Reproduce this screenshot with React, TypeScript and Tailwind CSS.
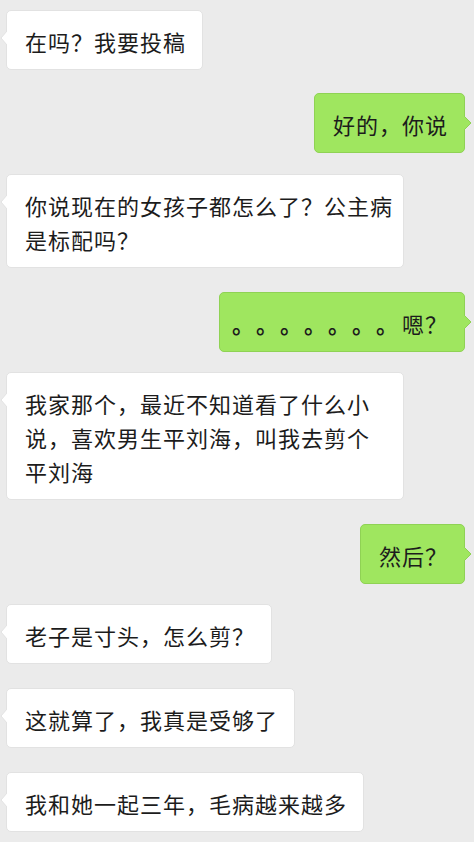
import React from 'react';

type Msg = {
  side: 'left' | 'right';
  lines: string[];
  mt: string;
  w?: string;
  dots?: boolean;
};

const messages: Msg[] = [
  { side: 'left', lines: ['在吗？我要投稿'], mt: 'mt-[10px]' },
  { side: 'right', lines: ['好的，你说'], mt: 'mt-[23px]' },
  { side: 'left', lines: ['你说现在的女孩子都怎么了？公主病', '是标配吗？'], mt: 'mt-[21px]', w: 'w-[398px]' },
  { side: 'right', lines: ['嗯？'], mt: 'mt-[24px]', dots: true },
  {
    side: 'left',
    lines: ['我家那个，最近不知道看了什么小', '说，喜欢男生平刘海，叫我去剪个', '平刘海'],
    mt: 'mt-[20px]',
    w: 'w-[398px]',
  },
  { side: 'right', lines: ['然后？'], mt: 'mt-[24px]' },
  { side: 'left', lines: ['老子是寸头，怎么剪？'], mt: 'mt-[20px]' },
  { side: 'left', lines: ['这就算了，我真是受够了'], mt: 'mt-[24px]' },
  { side: 'left', lines: ['我和她一起三年，毛病越来越多'], mt: 'mt-[24px]' },
];

function Bubble({ msg }: { msg: Msg }) {
  const isRight = msg.side === 'right';
  return (
    <div className={`flex ${isRight ? 'justify-end pr-[9px]' : 'justify-start pl-[6px]'} ${msg.mt}`}>
      <div
        className={`relative rounded-[5px] border ${msg.dots ? 'pl-[12px]' : 'pl-[18px]'} pr-[16px] pt-[13px] pb-[11px] text-[22px] leading-[34px] tracking-[1px] text-[#1c1c1c] ${
          isRight ? 'bg-[#9fe65f] border-[#8fd254]' : 'bg-white border-[#e2e2e2]'
        } ${msg.w ?? ''}`}
      >
        {msg.lines.map((l, i) => (
          <div key={i} className="whitespace-nowrap">
            {msg.dots &&
              [0, 1, 2, 3, 4, 5, 6].map((d) => (
                <span key={d} className="inline-block w-[24px] font-bold">
                  。
                </span>
              ))}
            {msg.dots ? <span className="ml-[2px]">{l}</span> : l}
          </div>
        ))}
        {/* tail */}
        {isRight ? (
          <svg className="absolute top-[22px] -right-[7px]" width="7" height="14" viewBox="0 0 7 14">
            <path d="M0 0 L7 7 L0 14 Z" fill="#9fe65f" />
            <path d="M0 0 L7 7 L0 14" fill="none" stroke="#8fd254" strokeWidth="1" />
          </svg>
        ) : (
          <svg className="absolute top-[20px] -left-[7px]" width="7" height="14" viewBox="0 0 7 14">
            <path d="M7 0 L1 7 L7 14 Z" fill="#ffffff" />
            <path d="M7 0 L1 7 L7 14" fill="none" stroke="#e2e2e2" strokeWidth="1" />
          </svg>
        )}
      </div>
    </div>
  );
}

export default function App() {
  return (
    <div
      className="w-[474px] h-[842px] overflow-hidden bg-[#ebebeb] [text-spacing-trim:space-all]"
      style={{ fontFamily: '"Noto Sans CJK SC", "Noto Sans", sans-serif' }}
    >
      {messages.map((m, i) => (
        <Bubble key={i} msg={m} />
      ))}
    </div>
  );
}
